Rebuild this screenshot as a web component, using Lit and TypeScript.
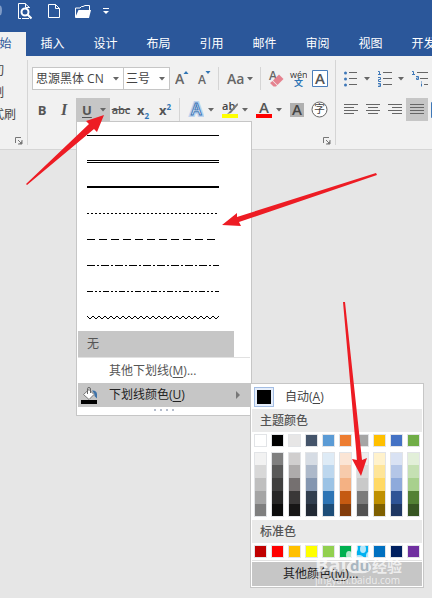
import { LitElement, html, svg, css, nothing } from "lit";
import { customElement, state } from "lit/decorators.js";
import { classMap } from "lit/directives/class-map.js";
import { styleMap } from "lit/directives/style-map.js";

const TABS = ["开始", "插入", "设计", "布局", "引用", "邮件", "审阅", "视图", "开发工具"];

const THEME: string[][] = [
  ["#ffffff", "#f2f2f2", "#d8d8d8", "#bfbfbf", "#a5a5a5", "#7f7f7f"],
  ["#000000", "#7f7f7f", "#595959", "#3f3f3f", "#262626", "#0c0c0c"],
  ["#e7e6e6", "#d0cece", "#aeabab", "#757070", "#3a3838", "#171616"],
  ["#44546a", "#d6dce4", "#adb9ca", "#8496b0", "#323f4f", "#222a35"],
  ["#5b9bd5", "#deebf6", "#bdd7ee", "#9cc3e5", "#2e75b5", "#1e4e79"],
  ["#ed7d31", "#fbe5d5", "#f7cbac", "#f4b183", "#c55a11", "#833c0b"],
  ["#a5a5a5", "#ededed", "#dbdbdb", "#c9c9c9", "#7b7b7b", "#525252"],
  ["#ffc000", "#fff2cc", "#fee599", "#ffd965", "#bf9000", "#7f6000"],
  ["#4472c4", "#d9e2f3", "#b4c6e7", "#8eaadb", "#2f5496", "#1f3864"],
  ["#70ad47", "#e2efd9", "#c5e0b3", "#a8d08d", "#538135", "#375623"],
];

const STANDARD = [
  "#c00000", "#ff0000", "#ffc000", "#ffff00", "#92d050",
  "#00b050", "#00b0f0", "#0070c0", "#002060", "#7030a0",
];

const wave = "M0 3" + Array.from({ length: 22 }, () => "l3 3l3 -3").join("");

const LINES = [
  { name: "单线", art: svg`<path d="M0 4.5H132"/>` },
  { name: "双线", art: svg`<path d="M0 3.5H132M0 5.5H132"/>` },
  { name: "粗线", art: svg`<path stroke-width="2" d="M0 4H132"/>` },
  { name: "点线", art: svg`<path stroke-dasharray="2 2" d="M0 4.5H132"/>` },
  { name: "虚线", art: svg`<path stroke-dasharray="8 4" d="M0 4.5H132"/>` },
  { name: "点划线", art: svg`<path stroke-dasharray="8 2 2 2" d="M0 4.5H132"/>` },
  { name: "双点划线", art: svg`<path stroke-dasharray="6 2 2 2 2 2" d="M0 4.5H132"/>` },
  { name: "波浪线", art: svg`<path shape-rendering="auto" fill="none" d=${wave}/>` },
];

const caret = html`<svg class="caret" width="6" height="4" viewBox="0 0 6 4" aria-hidden="true">
  <path d="M0 0H6L3 3.5Z" fill="#666"/></svg>`;

const launcher = (label: string) => html`<button class="launcher" aria-label=${label}>
  <svg width="8" height="8" viewBox="0 0 8 8"><path d="M.5 6V.5H6M3 3L6 6M7 3V7H3" fill="none" stroke="#777"/><path d="M7 4V7H4Z" fill="#777"/></svg>
</button>`;

const strokes = (d: string) => html`<svg width="14" height="11" viewBox="0 0 14 11" shape-rendering="crispEdges">
  <path d=${d} stroke="#666" fill="none"/></svg>`;

@customElement("color-swatch")
class ColorSwatch extends LitElement {
  static properties = { color: {}, joined: { type: Boolean, reflect: true } };
  declare color: string;
  declare joined: boolean;
  static styles = css`
    :host { display: block; }
    button {
      display: block; width: 13px; height: 13px; padding: 0; box-sizing: border-box;
      border: 1px solid #e2e4e7; border-radius: 0;
    }
    :host([joined]) button { border-width: 0 1px; }
    :host([joined]:first-child) button { border-top-width: 1px; }
    :host([joined]:last-child) button { border-bottom-width: 1px; }
  `;
  render() {
    return html`<button aria-label=${this.color} style=${styleMap({ background: this.color })}></button>`;
  }
}

@customElement("color-menu")
class ColorMenu extends LitElement {
  static styles = css`
    :host {
      display: block; box-sizing: border-box; width: 174px; padding: 0 1px 1px;
      background: #fff; border: 1px solid #c6c6c6;
      font: 12px/16px "Open Sans", "Noto Sans CJK SC", sans-serif; color: #444;
    }
    button.row {
      display: flex; align-items: center; width: 100%; height: 25px; padding: 0 2px;
      border: 0; background: none; font: inherit; color: inherit; gap: 11px;
    }
    .auto { box-sizing: border-box; width: 20px; height: 20px; padding: 2px; border: 1px solid #a3bde3; background: #e6eefa; }
    .auto i { display: block; height: 14px; background: #000; }
    h3 {
      margin: 0; height: 23px; padding: 0 8px; background: #eaeaea;
      font-size: 12px; line-height: 23px; font-weight: 500; color: #555;
    }
    .swatches { display: flex; gap: 4px; padding: 2px; }
    .tints { display: flex; gap: 4px; padding: 3px 2px; }
    button.more { height: 24px; margin-top: 1px; padding: 0 31px; background: #c6c6c6; color: #222; }
    .rule { height: 1px; background: #e1e1e1; }
    u { text-underline-offset: 2px; }
  `;
  render() {
    return html`
      <button class="row"><span class="auto"><i></i></span><span>自动(<u>A</u>)</span></button>
      <h3>主题颜色</h3>
      <div class="swatches">${THEME.map((c) => html`<color-swatch .color=${c[0]}></color-swatch>`)}</div>
      <div class="tints">
        ${THEME.map((c) => html`<div>${c.slice(1).map((t) => html`<color-swatch joined .color=${t}></color-swatch>`)}</div>`)}
      </div>
      <h3>标准色</h3>
      <div class="swatches">${STANDARD.map((c) => html`<color-swatch .color=${c}></color-swatch>`)}</div>
      <div class="rule"></div>
      <button class="row more"><span>其他颜色(<u>M</u>)...</span></button>
    `;
  }
}

@customElement("underline-menu")
class UnderlineMenu extends LitElement {
  static styles = css`
    :host {
      display: block; box-sizing: border-box; width: 176px; padding: 1px 1px 0;
      background: #fff; border: 1px solid #c6c6c6;
      font: 12px/16px "Open Sans", "Noto Sans CJK SC", sans-serif; color: #555;
    }
    button {
      display: flex; align-items: center; width: 100%; height: 26px; padding: 0 9px;
      border: 0; background: none; font: inherit; color: inherit;
    }
    button.none { width: 156px; background: #c6c6c6; }
    .rule { height: 1px; margin-bottom: 1px; background: #e1e1e1; }
    button.command { height: 24px; padding: 0 9px 0 3px; gap: 11px; }
    button.command span { flex: 1; text-align: left; }
    .icon { width: 17px; height: 17px; }
    .colour { position: relative; }
    .colour > button { background: #c6c6c6; color: #222; }
    color-menu { position: absolute; left: 100%; top: 0; }
    .grip { display: flex; justify-content: center; gap: 4px; padding: 2px 0 4px; }
    .grip i { width: 2px; height: 2px; background: #b4bccb; }
    u { text-underline-offset: 2px; }
  `;
  render() {
    return html`
      ${LINES.map((l) => html`<button aria-label=${l.name}>
        <svg width="132" height="10" viewBox="0 0 132 10" stroke="#000" shape-rendering="crispEdges">${l.art}</svg>
      </button>`)}
      <button class="none">无</button>
      <div class="rule"></div>
      <button class="command"><i class="icon"></i><span>其他下划线(<u>M</u>)...</span></button>
      <div class="colour">
        <button class="command">
          <svg class="icon" viewBox="0 0 17 17" aria-hidden="true">
            <path d="M8 2.500L2.500 7.500L8 12.500L13 7.500Z" fill="#fff" stroke="#777"/>
            <path d="M6.500 7V1.500Q6.500 .5 8 .5Q9.500 .5 9.500 2V6" fill="none" stroke="#666"/>
            <path d="M11 3.500Q15.500 3 16 7V11.500L13.500 9V7Z" fill="#3e72a8"/>
            <path d="M0 13H16V17H0Z" fill="#000"/>
          </svg>
          <span>下划线颜色(<u>U</u>)</span>
          <svg width="5" height="8" viewBox="0 0 5 8" aria-hidden="true"><path d="M0 0L4 4L0 8Z" fill="#777"/></svg>
        </button>
        <color-menu></color-menu>
      </div>
      <div class="grip"><i></i><i></i><i></i><i></i></div>
    `;
  }
}

@customElement("app-root")
class AppRoot extends LitElement {
  @state() private active = 0;
  @state() private menuOpen = true;

  static styles = css`
    :host {
      display: block; position: relative; overflow: hidden; min-height: 100vh;
      background: #e6e6e6; color: #444;
      font: 12px/16px "Open Sans", "Noto Sans CJK SC", sans-serif;
    }
    button { border: 0; padding: 0; background: none; font: inherit; color: inherit; }
    header { background: #2b579a; color: #fff; }
    .quick { display: flex; align-items: center; height: 32px; padding-bottom: 10px; box-sizing: border-box; }
    .quick button { display: flex; justify-content: center; width: 29px; }
    .quick .edge { width: 10px; justify-content: flex-start; }
    .quick .customize { width: 18px; }
    nav { display: flex; margin-left: -27px; }
    nav button { flex: none; width: 53px; height: 24px; white-space: nowrap; }
    nav button:last-child { width: 77px; }
    nav button.active { background: #f1f1f1; color: #2b579a; }
    .ribbon { display: flex; background: #f1f1f1; border-bottom: 1px solid #d5d5d5; }
    .group { flex: none; display: flex; flex-direction: column; margin: 4px 0; border-right: 1px solid #d5d5d5; }
    .clipboard { margin-left: -20px; width: 47px; }
    .clipboard button:not(.launcher) { height: 22px; text-align: left; }
    .font { width: 304px; padding: 7px 0 0 3px; }
    .paragraph { padding: 7px 0 0 4px; border: 0; }
    .bar { display: flex; align-items: center; height: 23px; margin-bottom: 8px; }
    .bar:nth-of-type(2) { margin-bottom: 16px; }
    .launcher { display: flex; align-self: flex-end; margin: auto 4px 0 0; }
    .tool { flex: none; display: flex; align-items: center; justify-content: center; width: 22px; height: 23px; color: #555; }
    .drop { width: 34px; justify-content: space-between; padding: 0 4px; box-sizing: border-box; }
    .on { background: #c6c6c6; }
    .sep { flex: none; width: 1px; height: 23px; margin: 0 4px 0 3px; background: #d5d5d5; }
    .combo { display: grid; align-items: center; margin-left: 1px; width: 92px; }
    .combo.size { width: 46px; margin: 0 1px 0 0; }
    .combo > * { grid-area: 1 / 1; }
    .combo .caret { justify-self: end; margin-right: 5px; pointer-events: none; }
    select {
      appearance: none; box-sizing: border-box; width: 100%; height: 23px; padding: 0 0 0 3px;
      border: 1px solid #c6c6c6; border-radius: 0; background: #fff; font: inherit; color: #444;
    }
    .size select { border-left: 0; padding-left: 2px; }
    .anchor { position: relative; margin-left: 1px; }
    underline-menu { position: absolute; z-index: 1; left: 0; top: 100%; }
    .b { font-weight: 700; font-size: 13px; }
    .b.drop { padding-left: 6px; }
    .b u { text-underline-offset: 2px; }
    .i { font-style: italic; font-weight: 600; font-family: "Liberation Serif", serif; font-size: 16px; }
    .strike { text-decoration: line-through; font-weight: 600; font-size: 11px; }
    sub, sup { font-size: 8px; line-height: 0; color: #2e75b5; }
    .case { font-size: 14px; font-weight: 600; color: #666; }
    svg text { font-family: "Open Sans", "Noto Sans CJK SC", sans-serif; }
    .overlay { position: absolute; left: 0; top: 0; overflow: visible; z-index: 2; pointer-events: none; }
  `;

  private quickAccess() {
    return html`<div class="quick">
      <button class="edge" aria-label="重做"><svg width="3" height="12" viewBox="0 0 3 12"><path d="M0 1Q2 5 0 10" stroke="#7f9bc6" stroke-width="2" fill="none"/></svg></button>
      <button aria-label="打印预览"><svg width="15" height="17" viewBox="0 0 15 17" fill="none" stroke="#fff">
        <path d="M4 15.500H1.500V.5H8L12.500 4.500V5M8.500 .5V4.500H12.500M12 15.500H5"/><circle cx="8" cy="9" r="3.500" stroke-width="2"/><path d="M10.500 11.500L14.500 15.500" stroke-width="2.200"/></svg></button>
      <button aria-label="新建"><svg width="12" height="14" viewBox="0 0 12 14" fill="none" stroke="#fff">
        <path d="M.5 .5H7.500L11.500 4.500V13.500H.5ZM7.500 .5V4.500H11.500"/></svg></button>
      <button aria-label="打开"><svg width="16" height="13" viewBox="0 0 16 13">
        <path d="M.5 12V3H5L6.500 1.500H8L10 .5H14.500V5" fill="none" stroke="#fff"/><path d="M0 13L3.500 5H16L14 13Z" fill="#fff"/></svg></button>
      <button class="customize" aria-label="自定义快速访问工具栏"><svg width="6" height="6" viewBox="0 0 6 6">
        <path d="M0 .5H6" stroke="#fff"/><path d="M0 3H6L3 6Z" fill="#fff"/></svg></button>
    </div>`;
  }

  private fontGroup() {
    return html`<section class="group font" aria-label="字体">
      <div class="bar">
        <div class="combo"><select aria-label="字体"><option>思源黑体 CN</option><option>宋体</option></select>${caret}</div>
        <div class="combo size"><select aria-label="字号"><option>三号</option><option>四号</option></select>${caret}</div>
        <button class="tool" aria-label="增大字号"><svg width="14" height="17" viewBox="0 0 14 17"><text x="0" y="14" font-size="14" font-weight="600" fill="#666">A</text><path d="M8.500 4L11 1L13.500 4Z" fill="#2e75b5"/></svg></button>
        <button class="tool" aria-label="减小字号"><svg width="14" height="17" viewBox="0 0 14 17"><text x="1" y="14" font-size="12" font-weight="600" fill="#666">A</text><path d="M8.500 1L11 4L13.500 1Z" fill="#2e75b5"/></svg></button>
        <span class="sep"></span>
        <button class="tool drop case" aria-label="更改大小写">Aa${caret}</button>
        <span class="sep"></span>
        <button class="tool" aria-label="清除格式"><svg width="16" height="17" viewBox="0 0 16 17"><text x="1" y="10" font-size="12" font-weight="600" fill="#666">A</text><path d="M5 10.500L11 4.500L15.500 9L9.500 15Z" fill="#e5828f"/><path d="M2 13L4.500 11L9 15.500L8 16.500H5.500Z" fill="#e5828f"/></svg></button>
        <button class="tool" aria-label="拼音指南"><svg width="18" height="17" viewBox="0 0 18 17"><text x="1" y="8" font-size="9" fill="#333">wén</text><text x="5" y="16" font-size="9" font-weight="700" fill="#2e75b5">文</text></svg></button>
        <button class="tool" aria-label="字符边框"><svg width="16" height="17" viewBox="0 0 16 17"><path d="M.5 .5H15.500V16.500H.5Z" fill="#fff" stroke="#4a7ebb"/><text x="3" y="14" font-size="15" font-weight="600" fill="#555">A</text></svg></button>
      </div>
      <div class="bar">
        <button class="tool b" aria-label="加粗">B</button>
        <button class="tool i" aria-label="倾斜">I</button>
        <div class="anchor">
          <button class="tool drop on b" aria-label="下划线" aria-expanded=${this.menuOpen} @click=${() => (this.menuOpen = !this.menuOpen)}><u>U</u>${caret}</button>
          ${this.menuOpen ? html`<underline-menu></underline-menu>` : nothing}
        </div>
        <button class="tool strike" aria-label="删除线">abc</button>
        <button class="tool b" aria-label="下标"><span>x<sub>2</sub></span></button>
        <button class="tool b" aria-label="上标"><span>x<sup>2</sup></span></button>
        <span class="sep"></span>
        <button class="tool drop" aria-label="文本效果"><svg width="16" height="17" viewBox="0 0 16 17"><text x="3" y="14" font-size="16" font-weight="600" fill="#fff" stroke="#bcd3ee" stroke-width="4">A</text><text x="3" y="14" font-size="16" font-weight="600" fill="#fff" stroke="#3f78b8" stroke-width="1">A</text></svg>${caret}</button>
        <button class="tool drop" aria-label="突出显示"><svg width="16" height="17" viewBox="0 0 16 17"><text x="0" y="9" font-size="11" font-weight="600" fill="#444">ab</text><path d="M15.500 2L8 10L5 13L9 12L16 4Z" fill="#777"/><path d="M0 13H16V17H0Z" fill="#ff0"/></svg>${caret}</button>
        <button class="tool drop" aria-label="字体颜色"><svg width="16" height="17" viewBox="0 0 16 17"><text x="3" y="12" font-size="15" font-weight="600" fill="#555">A</text><path d="M0 13H16V17H0Z" fill="#f00"/></svg>${caret}</button>
        <button class="tool" aria-label="字符底纹"><svg width="14" height="14" viewBox="0 0 14 14"><path d="M0 0H14V14H0Z" fill="#b0b0b0"/><text x="2" y="12" font-size="15" font-weight="600" fill="#444">A</text></svg></button>
        <button class="tool" aria-label="带圈字符"><svg width="17" height="17" viewBox="0 0 17 17"><circle cx="8.500" cy="8.500" r="7.500" fill="#fff" stroke="#666"/><text x="3" y="12" font-size="11" fill="#444">字</text></svg></button>
      </div>
      ${launcher("字体设置")}
    </section>`;
  }

  private paragraphGroup() {
    return html`<section class="group paragraph" aria-label="段落">
      <div class="bar">
        <button class="tool drop" aria-label="项目符号"><svg width="14" height="16" viewBox="0 0 14 16"><g fill="#3f78b8"><circle cx="1.500" cy="2" r="1.500"/><circle cx="1.500" cy="8" r="1.500"/><circle cx="1.500" cy="14" r="1.500"/></g><path d="M5 1.500H13M5 7.500H13M5 13.500H13" stroke="#666" shape-rendering="crispEdges"/></svg>${caret}</button>
        <button class="tool drop" aria-label="编号"><svg width="14" height="16" viewBox="0 0 14 16"><g fill="none" stroke="#3f78b8"><path d="M0 .5H1.500V3.500M0 3.500H3M0 6.500H2.500V8.500H.5V10.500H3M0 12.500H2.500V15.500H0M.5 14H2.500"/></g><path d="M5 1.500H14M5 7.500H14M5 13.500H14" stroke="#666" shape-rendering="crispEdges"/></svg>${caret}</button>
        <button class="tool drop" aria-label="多级列表"><svg width="16" height="16" viewBox="0 0 16 16"><g fill="none" stroke="#3f78b8"><path d="M0 .5H1.500V3.500M0 3.500H3M4 5.500H6.500V8.500H4.500V7H6.500M9.500 10.500V11.500M9.500 12.500V15.500"/></g><path d="M5 1.500H16M8 7.500H16M12 13.500H16" stroke="#666" shape-rendering="crispEdges"/></svg>${caret}</button>
      </div>
      <div class="bar">
        <button class="tool" aria-label="左对齐">${strokes("M0 .5H14M0 3.5H10M0 6.5H14M0 9.5H10")}</button>
        <button class="tool" aria-label="居中">${strokes("M0 .5H14M2 3.5H12M0 6.5H14M2 9.5H12")}</button>
        <button class="tool" aria-label="右对齐">${strokes("M0 .5H14M4 3.5H14M0 6.5H14M4 9.5H14")}</button>
        <button class="tool on" aria-label="两端对齐">${strokes("M0 .5H14M0 3.5H14M0 6.5H14M0 9.5H14")}</button>
        <button class="tool" aria-label="分散对齐"><svg width="16" height="16" viewBox="0 0 16 16"><path d="M.5 .5H15.500V15.500H.5Z" fill="none" stroke="#3f78b8"/></svg></button>
      </div>
    </section>`;
  }

  render() {
    return html`
      <header>
        ${this.quickAccess()}
        <nav>${TABS.map((t, i) => html`<button class=${classMap({ active: i === this.active })} @click=${() => (this.active = i)}>${t}</button>`)}</nav>
      </header>
      <main class="ribbon">
        <section class="group clipboard" aria-label="剪贴板">
          <button>剪切</button><button>复制</button><button>格式刷</button>
          ${launcher("剪贴板设置")}
        </section>
        ${this.fontGroup()} ${this.paragraphGroup()}
      </main>
      <svg class="overlay" width="432" height="598" viewBox="0 0 432 598" aria-hidden="true">
        <g fill="#fff" fill-opacity=".7">
          <ellipse cx="349" cy="555" rx="3" ry="4"/><ellipse cx="355" cy="548" rx="3" ry="4"/>
          <ellipse cx="363" cy="549" rx="3" ry="4"/><ellipse cx="369" cy="556" rx="3" ry="4"/>
          <path d="M359 555Q363 555 366 560Q372 565 371 569Q369 574 359 573Q349 574 347 569Q346 565 352 560Q355 555 359 555Z"/>
          <text x="315" y="572" font-size="20" font-weight="700">Bai</text>
          <text x="372" y="572" font-size="15" font-weight="700">经验</text>
          <text x="315" y="584" font-size="10">jingyan.baidu.com</text>
        </g>
        <text x="350" y="571" font-size="15" font-weight="700" fill="#a9b6c0">du</text>
        <g fill="#ed1c24">
          <path d="M104 115L86 121L89 124L26 184L27 185L94 129L97 132Z"/>
          <path d="M222 225L237 213L237 217L376 173L377 175L239 222L241 226Z"/>
          <path d="M361 476L352 459L357 460L343 302L345 302L362 460L367 458Z"/>
        </g>
      </svg>
    `;
  }
}
